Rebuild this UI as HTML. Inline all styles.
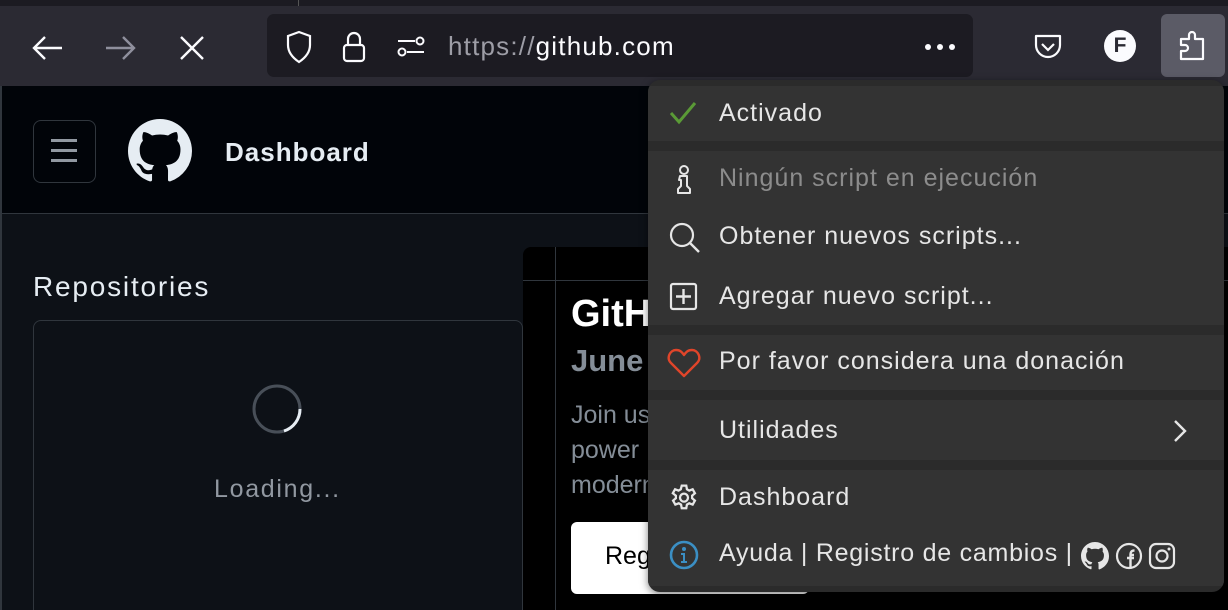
<!DOCTYPE html>
<html><head><meta charset="utf-8"><style>
*{margin:0;padding:0;box-sizing:border-box}
html,body{width:1228px;height:610px;overflow:hidden}
body{background:#0d1117;font-family:"Liberation Sans",sans-serif;position:relative}
.abs{position:absolute}
.mi{position:absolute;left:0;right:0;background:#333;}
.t{position:absolute;left:71px;font-size:25px;color:#e6e6e6;white-space:nowrap;letter-spacing:1px}
.ic{position:absolute;left:20px}
</style></head><body>
<div class="abs" style="left:0;top:0;width:1228px;height:6px;background:#1c1b22"></div>
<div class="abs" style="left:298px;top:0;width:1px;height:6px;background:#555"></div>
<div class="abs" style="left:0;top:6px;width:1228px;height:80px;background:#2b2a33"></div>
<svg class="abs" style="left:30px;top:32px" width="36" height="32" viewBox="0 0 36 32"><path d="M32 16H4M15 5L4 16l11 11" stroke="#fbfbfe" stroke-width="2.4" fill="none"/></svg>
<svg class="abs" style="left:102px;top:32px" width="36" height="32" viewBox="0 0 36 32"><path d="M4 16h28M21 5l11 11-11 11" stroke="#8f8f9d" stroke-width="2.4" fill="none"/></svg>
<svg class="abs" style="left:176px;top:32px" width="32" height="32" viewBox="0 0 32 32"><path d="M5 5l22 22M27 5L5 27" stroke="#fbfbfe" stroke-width="2.4"/></svg>
<div class="abs" style="left:267px;top:14px;width:706px;height:63px;background:#1c1b22;border-radius:7px"></div>
<svg class="abs" style="left:284px;top:30px" width="30" height="34" viewBox="0 0 30 34"><path d="M15 2L4 6v9c0 8 5 13 11 17 6-4 11-9 11-17V6z" stroke="#fbfbfe" stroke-width="2.2" fill="none"/></svg>
<svg class="abs" style="left:340px;top:30px" width="30" height="34" viewBox="0 0 30 34"><rect x="4" y="15" width="20" height="16" rx="3" stroke="#fbfbfe" stroke-width="2.2" fill="none"/><path d="M8 15V9a6 6 0 0112 0v6" stroke="#fbfbfe" stroke-width="2.2" fill="none"/></svg>
<svg class="abs" style="left:395px;top:34px" width="32" height="26" viewBox="0 0 32 26"><circle cx="25" cy="7" r="3.5" stroke="#fbfbfe" stroke-width="2" fill="none"/><path d="M3 7h17M12 18h17" stroke="#fbfbfe" stroke-width="2"/><circle cx="7" cy="18" r="3.5" stroke="#fbfbfe" stroke-width="2" fill="none"/></svg>
<div class="abs" style="left:448px;top:31px;font-size:26px;letter-spacing:1.2px;color:#fbfbfe"><span style="color:#9d9da6">https://</span>github.com</div>
<div class="abs" style="left:925px;top:44px;width:6px;height:6px;border-radius:3px;background:#fbfbfe;box-shadow:12px 0 #fbfbfe,24px 0 #fbfbfe"></div>
<svg class="abs" style="left:1033px;top:33px" width="30" height="28" viewBox="0 0 30 28"><path d="M3 3h24v9a12 12 0 01-24 0z" stroke="#fbfbfe" stroke-width="2.2" fill="none" stroke-linejoin="round"/><path d="M9 11l6 6 6-6" stroke="#fbfbfe" stroke-width="2.2" fill="none"/></svg>
<div class="abs" style="left:1104px;top:30px;width:32px;height:32px;border-radius:50%;background:#fbfbfe;color:#2b2a33;font-weight:bold;font-size:21px;text-align:center;line-height:32px">F</div>
<div class="abs" style="left:1161px;top:14px;width:64px;height:63px;background:#5b5b66;border-radius:6px"></div>
<svg class="abs" style="left:1177px;top:29px" width="32" height="34" viewBox="0 0 32 34"><path d="M4 10h8V6a3 3 0 016 0v4h8v20H4v-8h4a3 3 0 000-6H4z" stroke="#fbfbfe" stroke-width="2.2" fill="none" stroke-linejoin="round"/></svg>
<div class="abs" style="left:0;top:86px;width:1228px;height:128px;background:#010409;border-bottom:1px solid #30363d"></div>
<div class="abs" style="left:0;top:86px;width:2px;height:524px;background:#30363d"></div>
<div class="abs" style="left:33px;top:120px;width:63px;height:63px;border:1px solid #30363d;border-radius:8px"></div>
<div class="abs" style="left:51px;top:139px;width:26px;height:3px;background:#9198a1;box-shadow:0 10px #9198a1,0 20px #9198a1"></div>
<svg class="abs" style="left:128px;top:119px" width="64" height="64" viewBox="0 0 16 16"><path fill="#e6edf3" d="M8 0C3.58 0 0 3.58 0 8c0 3.540 2.29 6.53 5.47 7.59.4.07.55-.17.55-.38 0-.19-.01-.82-.01-1.49-2.01.37-2.530-.49-2.690-.94-.09-.23-.48-.94-.82-1.130-.28-.15-.68-.52-.01-.53.63-.01 1.080.58 1.230.82.72 1.21 1.870.87 2.330.66.07-.52.28-.87.51-1.07-1.78-.2-3.64-.89-3.64-3.95 0-.87.31-1.59.82-2.15-.08-.2-.36-1.02.08-2.12 0 0 .67-.21 2.2.82.64-.18 1.32-.27 2-.27.68 0 1.36.09 2 .27 1.53-1.04 2.2-.82 2.2-.82.44 1.1.16 1.92.08 2.12.51.56.82 1.27.82 2.15 0 3.070-1.87 3.75-3.65 3.95.29.25.54.73.54 1.48 0 1.07-.01 1.93-.01 2.2 0 .21.15.46.55.38A8.013 8.013 0 0016 8c0-4.42-3.58-8-8-8z"/></svg>
<div class="abs" style="left:225px;top:137px;font-size:26px;font-weight:bold;color:#e6edf3;letter-spacing:1px">Dashboard</div>
<div class="abs" style="left:33px;top:271px;font-size:28px;color:#e6edf3;letter-spacing:1.8px">Repositories</div>
<div class="abs" style="left:33px;top:320px;width:490px;height:300px;border:1px solid #30363d;border-radius:8px"></div>
<svg class="abs" style="left:246px;top:378px" width="62" height="62" viewBox="0 0 62 62"><circle cx="31" cy="31" r="23" stroke="#484f58" stroke-width="3" fill="none"/><path d="M54 31A23 23 0 0138 53" stroke="#e6edf3" stroke-width="3" fill="none"/></svg>
<div class="abs" style="left:214px;top:475px;font-size:25px;color:#9198a1;letter-spacing:1.7px">Loading...</div>
<div class="abs" style="left:523px;top:247px;width:705px;height:363px;background:#000;border-radius:8px 0 0 0"></div>
<div class="abs" style="left:555px;top:247px;width:1px;height:363px;background:#30363d"></div>
<div class="abs" style="left:523px;top:280px;width:705px;height:1px;background:#30363d"></div>
<div class="abs" style="left:571px;top:293px;font-size:38px;font-weight:bold;color:#fff">GitHub</div>
<div class="abs" style="left:571px;top:343px;font-size:31px;font-weight:bold;color:#848d97">June</div>
<div class="abs" style="left:571px;top:398px;font-size:25px;line-height:35px;color:#848d97">Join us<br>power<br>modern</div>
<div class="abs" style="left:571px;top:522px;width:238px;height:72px;background:#fff;border-radius:6px;padding:20px 34px;font-size:25px;color:#000">Register</div>
<div class="abs" style="left:648px;top:80px;width:576px;height:512px;background:#2b2b2b;border-radius:12px;overflow:hidden;box-shadow:0 2px 8px rgba(0,0,0,.5)">
 <div class="mi" style="top:6px;height:55px">
  <svg class="ic" style="top:14px" width="30" height="26" viewBox="0 0 30 26"><path d="M3 13l8 9L27 3" stroke="#5a9a36" stroke-width="3" fill="none"/></svg>
  <div class="t" style="top:13px">Activado</div></div>
 <div class="mi" style="top:71px;height:174px">
  <svg class="ic" style="top:13px;left:27px" width="18" height="32" viewBox="0 0 18 32"><circle cx="9" cy="6" r="4" stroke="#e6e6e6" stroke-width="2" fill="none"/><path d="M5 12h7v10l3 3v4H3v-4l3-3v-6H4z" stroke="#e6e6e6" stroke-width="2" fill="none" stroke-linejoin="round"/></svg>
  <div class="t" style="top:13px;color:#8c8c8c">Ningún script en ejecución</div>
  <svg class="ic" style="top:70px" width="34" height="34" viewBox="0 0 34 34"><circle cx="14" cy="14" r="11" stroke="#e6e6e6" stroke-width="2.2" fill="none"/><path d="M22 22l9 9" stroke="#e6e6e6" stroke-width="2.4"/></svg>
  <div class="t" style="top:71px">Obtener nuevos scripts...</div>
  <svg class="ic" style="top:131px;left:21px" width="30" height="30" viewBox="0 0 30 30"><rect x="2" y="2" width="25" height="25" rx="2" stroke="#e6e6e6" stroke-width="2.2" fill="none"/><path d="M14.5 7v15M7 14.5h15" stroke="#e6e6e6" stroke-width="2.4"/></svg>
  <div class="t" style="top:131px">Agregar nuevo script...</div></div>
 <div class="mi" style="top:255px;height:55px">
  <svg class="ic" style="top:13px;left:19px" width="34" height="30" viewBox="0 0 34 30"><path d="M17 28L4 15C-1 10 3 2 9 2c4 0 6 2 8 5 2-3 4-5 8-5 6 0 10 8 5 13z" stroke="#e0452a" stroke-width="2.4" fill="none" stroke-linejoin="round"/></svg>
  <div class="t" style="top:12px">Por favor considera una donación</div></div>
 <div class="mi" style="top:320px;height:60px">
  <div class="t" style="top:16px">Utilidades</div>
  <svg class="abs" style="left:524px;top:18px" width="16" height="26" viewBox="0 0 16 26"><path d="M3 3l10 10L3 23" stroke="#e6e6e6" stroke-width="2.4" fill="none"/></svg></div>
 <div class="mi" style="top:390px;height:116px">
  <svg class="ic" style="top:13px;left:20px" width="32" height="32" viewBox="0 0 24 24"><path fill="none" stroke="#e6e6e6" stroke-width="1.7" d="M10.3 2h3.4l.5 2.7 1.7 1 2.6-1 1.7 3-2.1 1.8v1.9l2.1 1.8-1.7 3-2.6-1-1.7 1-.5 2.7h-3.4l-.5-2.7-1.7-1-2.6 1-1.7-3 2.1-1.8v-1.9L3.6 7.7l1.7-3 2.6 1 1.7-1z"/><circle cx="12" cy="11" r="3" fill="none" stroke="#e6e6e6" stroke-width="1.7"/></svg>
  <div class="t" style="top:13px">Dashboard</div>
  <svg class="ic" style="top:69px;left:20px" width="32" height="32" viewBox="0 0 32 32"><circle cx="16" cy="16" r="13" stroke="#3b8fc4" stroke-width="2.6" fill="none"/><circle cx="16" cy="10" r="2" fill="#3b8fc4"/><path d="M13 14h4v8h2v2h-6v-2h2v-6h-2z" fill="#3b8fc4"/></svg>
  <div class="t" style="top:69px;letter-spacing:0.75px">Ayuda | Registro de cambios |</div>
  <svg class="abs" style="left:433px;top:72px" width="28" height="28" viewBox="0 0 16 16"><path fill="#e6e6e6" d="M8 0C3.58 0 0 3.58 0 8c0 3.54 2.29 6.53 5.47 7.59.4.07.55-.17.55-.38v-1.4c-2.2.5-2.7-1-2.7-1-.4-.9-.9-1.2-.9-1.2-.7-.5.1-.5.1-.5.8.1 1.2.8 1.2.8.7 1.2 1.9.9 2.3.7.1-.5.3-.9.5-1.1-1.8-.2-3.6-.9-3.6-4 0-.9.3-1.6.8-2.1-.1-.2-.4-1 .1-2.1 0 0 .7-.2 2.2.8a7.6 7.6 0 014 0c1.5-1 2.2-.8 2.2-.8.4 1.1.2 1.9.1 2.1.5.6.8 1.3.8 2.1 0 3.1-1.9 3.8-3.6 4 .3.3.5.7.5 1.5v2.2c0 .2.1.5.6.4A8 8 0 0016 8c0-4.42-3.58-8-8-8z"/></svg>
  <svg class="abs" style="left:467px;top:72px" width="28" height="28" viewBox="0 0 28 28"><circle cx="14" cy="14" r="12" stroke="#e6e6e6" stroke-width="2.2" fill="none"/><path d="M15.5 26V13h3.5M12 16h7M15.5 13c0-3 1-4.5 4-4.5" stroke="#e6e6e6" stroke-width="2.4" fill="none"/></svg>
  <svg class="abs" style="left:500px;top:72px" width="28" height="28" viewBox="0 0 28 28"><rect x="2" y="2" width="24" height="24" rx="6" stroke="#e6e6e6" stroke-width="2.2" fill="none"/><circle cx="14" cy="14" r="5.5" stroke="#e6e6e6" stroke-width="2.2" fill="none"/><circle cx="21" cy="7" r="1.5" fill="#e6e6e6"/></svg>
 </div>
</div>
</body></html>
